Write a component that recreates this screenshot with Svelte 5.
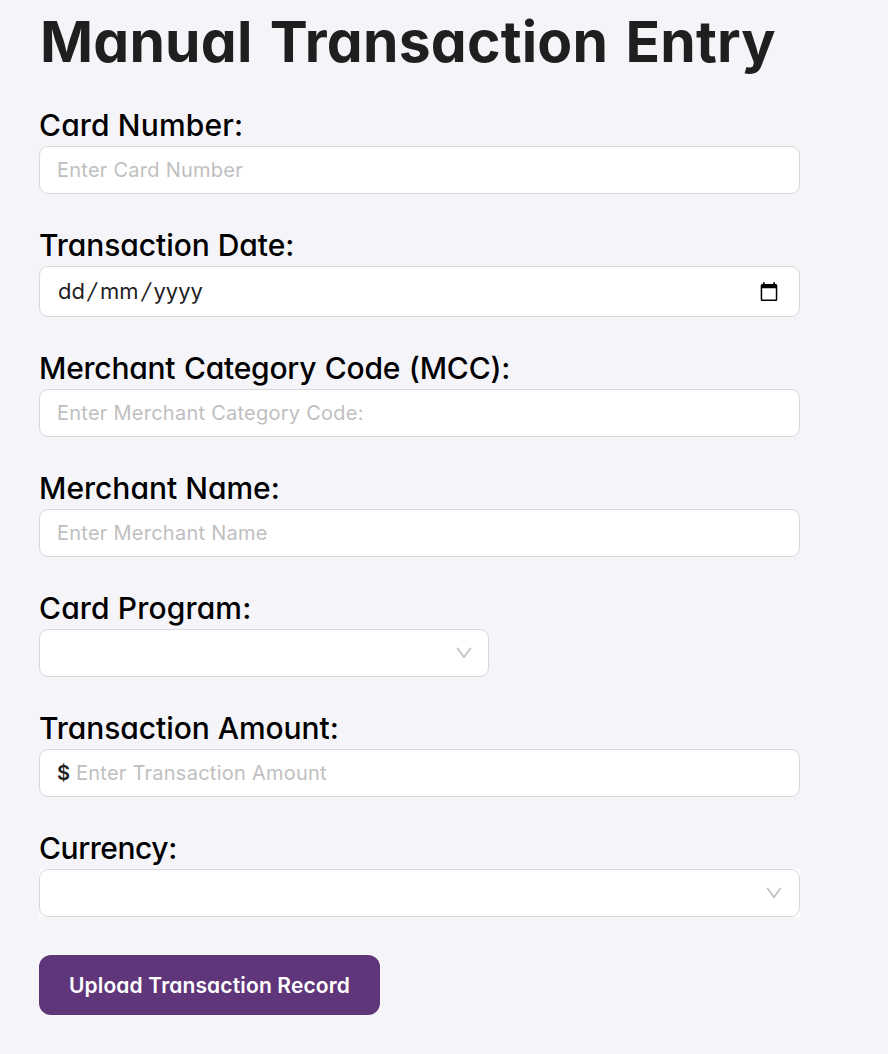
<script>
  const fields = [
    { id: 'card', label: 'Card Number:', type: 'text', placeholder: 'Enter Card Number' },
    { id: 'date', label: 'Transaction Date:', type: 'date' },
    { id: 'mcc', label: 'Merchant Category Code (MCC):', type: 'text', placeholder: 'Enter Merchant Category Code:' },
    { id: 'merchant', label: 'Merchant Name:', type: 'text', placeholder: 'Enter Merchant Name' },
    { id: 'program', label: 'Card Program:', type: 'select' },
    { id: 'amount', label: 'Transaction Amount:', type: 'text', prefix: '$', placeholder: 'Enter Transaction Amount' },
    { id: 'currency', label: 'Currency:', type: 'select' }
  ];
</script>

<main>
  <h1>Manual Transaction Entry</h1>
  <form>
    {#each fields as f}
      <div class="field">
        <label for={f.id} class="l-{f.id}">{f.label}</label>
        <div class="wrap w-{f.id}">
          <div class="box {f.type}">
            {#if f.type === 'text'}
              {#if f.prefix}<span class="prefix">{f.prefix}</span>{/if}
              <input id={f.id} type="text" placeholder={f.placeholder} />
            {:else if f.type === 'date'}
              <span class="date-text"><span>dd</span><span class="slash">/</span><span>mm</span><span class="slash">/</span><span>yyyy</span></span>
              <svg width="18" height="20" viewBox="0 0 18 20">
                <path fill="#000" fill-rule="evenodd" d="M3 .3h1.700V2h8.600V.3H15V2h.8A1.500 1.500 0 0 1 17.300 3.500V17.500A1.500 1.500 0 0 1 15.800 19H2.200A1.500 1.500 0 0 1 .7 17.500V3.500A1.500 1.500 0 0 1 2.200 2H3zM2.200 6.200v11.300h13.600v-11.300z" />
              </svg>
            {:else}
              <svg width="18" height="18" viewBox="64 64 896 896">
                <path fill="#bfbfbf" d="M884 256h-75c-5.100 0-9.900 2.500-12.900 6.600L512 654.200 227.900 262.600c-3-4.100-7.800-6.600-12.900-6.600h-75c-6.500 0-10.300 7.400-6.500 12.700l352.600 486.100c12.800 17.600 39 17.600 51.700 0l352.600-486.100c3.900-5.300.1-12.700-6.400-12.700z" />
              </svg>
            {/if}
          </div>
        </div>
      </div>
    {/each}
    <button type="button">Upload Transaction Record</button>
  </form>
</main>

<style>
  :global(body) { margin: 0; background: #f5f5f9; }
  main {
    box-sizing: border-box;
    min-height: 1054px;
    padding: 7px 88px 38px 39px;
    background: #f5f5f9;
    font-family: Inter, sans-serif;
    font-feature-settings: "cv11";
    overflow: hidden;
  }
  h1 {
    margin: 0 0 29px;
    padding-left: 1px;
    height: 70px;
    line-height: 70px;
    font-size: 57px;
    font-weight: 700;
    letter-spacing: .2px;
    word-spacing: 3.500px;
    color: #1f1f1f;
    white-space: nowrap;
  }
  form { display: flex; flex-direction: column; align-items: stretch; }
  .field { margin-bottom: 32px; }
  label {
    display: block;
    height: 38px;
    padding-bottom: 2px;
    line-height: 38px;
    font-size: 30px;
    font-weight: 500;
    color: #000;
    white-space: nowrap;
  }
  .l-card, .l-program { letter-spacing: .15px; }
  .l-date, .l-amount { letter-spacing: -.06px; }
  .l-mcc { letter-spacing: -.23px; word-spacing: .8px; }
  .l-currency { letter-spacing: -.45px; }
  .w-currency { background: #fff; }
  .w-program { width: 450px; }
  .box {
    box-sizing: border-box;
    display: flex;
    align-items: center;
    height: 48px;
    padding: 0 17px;
    border: 1px solid #d9d9d9;
    border-radius: 9px;
    background: #fff;
  }
  .date { height: 51px; justify-content: space-between; padding: 0 21.500px 0 18px; }
  .select { justify-content: flex-end; padding-right: 15px; }
  .w-currency .select { padding-right: 16px; }
  input {
    flex: 1;
    min-width: 0;
    padding: 0;
    border: 0;
    outline: 0;
    background: transparent;
    font: 400 20px/30px Inter, sans-serif;
    letter-spacing: .25px;
    color: #1f1f1f;
  }
  input::placeholder { color: #bfbfbf; opacity: 1; }
  .prefix { margin-right: 6px; font-size: 20px; font-weight: 600; color: #1f1f1f; }
  .date-text { display: flex; gap: 2px; padding-bottom: 2px; font-size: 22px; color: #1f1f1f; }
  .slash { width: 11px; text-align: center; transform: skewX(-12deg); }
  svg { display: block; flex: none; }
  button {
    width: 341px;
    height: 60px;
    margin-top: 6px;
    padding: 2px 0 0;
    border: 0;
    border-radius: 12px;
    background: #60367a;
    color: #fff;
    font: 600 21px/58px Inter, sans-serif;
    font-feature-settings: "cv11";
    letter-spacing: .15px;
    white-space: nowrap;
  }
</style>
